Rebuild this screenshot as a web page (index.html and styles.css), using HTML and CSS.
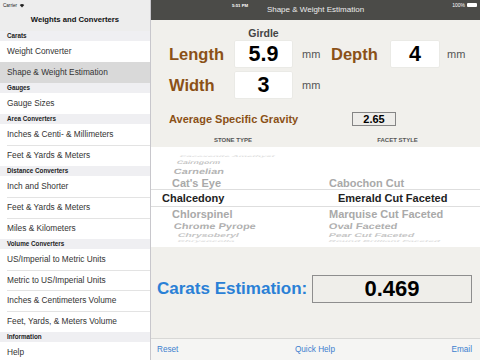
FILE: index.html
```html
<!DOCTYPE html>
<html>
  <head>
    <meta charset="utf-8" />
    <title>Weights and Converters</title>
    <link rel="stylesheet" href="styles.css">
  </head>

  <body>
    <div class="statusbar">
      <span class="carrier">
        Carrier
        <svg class="wifi" viewBox="0 0 10 8" width="6" height="5"><path d="M5 7.5 L1.2 3.2 A5.6 5.6 0 0 1 8.8 3.2 Z" fill="#222" /></svg>
      </span>
      <span class="clock">5:51 PM</span>
      <span class="power">100% <span class="battery"></span></span>
    </div>

    <div class="app">
      <aside class="master">
        <div class="master-bar">
          <h1>Weights and Converters</h1>
        </div>
        <ul class="menu">
          <li class="section">Carats</li>
          <li class="item">Weight Converter</li>
          <li class="item selected">Shape &amp; Weight Estimation</li>
          <li class="section">Gauges</li>
          <li class="item">Gauge Sizes</li>
          <li class="section">Area Converters</li>
          <li class="item">Inches &amp; Centi- &amp; Millimeters</li>
          <li class="item">Feet &amp; Yards &amp; Meters</li>
          <li class="section">Distance Converters</li>
          <li class="item">Inch and Shorter</li>
          <li class="item">Feet &amp; Yards &amp; Meters</li>
          <li class="item">Miles &amp; Kilometers</li>
          <li class="section">Volume Converters</li>
          <li class="item">US/Imperial to Metric Units</li>
          <li class="item">Metric to US/Imperial Units</li>
          <li class="item">Inches &amp; Centimeters Volume</li>
          <li class="item">Feet, Yards, &amp; Meters Volume</li>
          <li class="section">Information</li>
          <li class="item">Help</li>
        </ul>
      </aside>

      <main class="detail">
        <div class="detail-bar">
          <h2>Shape &amp; Weight Estimation</h2>
        </div>

        <div class="sheet">
          <div class="dims">
            <div class="girdle">Girdle</div>
            <div class="dim-row">
              <span class="dim-label">Length</span>
              <span class="dim-box">5.9</span>
              <span class="unit">mm</span>
              <span class="dim-label depth">Depth</span>
              <span class="dim-box narrow">4</span>
              <span class="unit last">mm</span>
            </div>
            <div class="dim-row">
              <span class="dim-label">Width</span>
              <span class="dim-box">3</span>
              <span class="unit">mm</span>
            </div>
          </div>

          <div class="gravity">
            <span class="gravity-label">Average Specific Gravity</span>
            <span class="gravity-box">2.65</span>
          </div>

          <div class="picker-heads">
            <span>STONE TYPE</span>
            <span>FACET STYLE</span>
          </div>

          <div class="picker">
            <div class="wheel stones">
              <div class="slot up4"><span>Cacoxenite Amethyst</span></div>
              <div class="slot up3"><span>Cairngorm</span></div>
              <div class="slot up2"><span>Carnelian</span></div>
              <div class="slot up1"><span>Cat's Eye</span></div>
              <div class="slot current"><span>Chalcedony</span></div>
              <div class="slot down1"><span>Chlorspinel</span></div>
              <div class="slot down2"><span>Chrome Pyrope</span></div>
              <div class="slot down3"><span>Chrysoberyl</span></div>
              <div class="slot down4"><span>Chrysocolla</span></div>
            </div>
            <div class="wheel facets">
              <div class="slot up4"></div>
              <div class="slot up3"></div>
              <div class="slot up2"></div>
              <div class="slot up1"><span>Cabochon Cut</span></div>
              <div class="slot current"><span>Emerald Cut Faceted</span></div>
              <div class="slot down1"><span>Marquise Cut Faceted</span></div>
              <div class="slot down2"><span>Oval Faceted</span></div>
              <div class="slot down3"><span>Pear Cut Faceted</span></div>
              <div class="slot down4"><span>Round Brilliant Faceted</span></div>
            </div>
          </div>

          <div class="estimate">
            <span class="estimate-label">Carats Estimation:</span>
            <span class="estimate-box">0.469</span>
          </div>
        </div>

        <div class="toolbar">
          <a href="#">Reset</a>
          <a href="#">Quick Help</a>
          <a href="#">Email</a>
        </div>
      </main>
    </div>
  </body>
</html>
```

FILE: styles.css
```css
* {
  box-sizing: border-box;
}

html,
body {
  margin: 0;
  padding: 0;
  overflow: hidden;
}

body {
  position: relative;
  width: 480px;
  height: 360px;
  font-family: 'Liberation Sans', Arial, sans-serif;
}

a {
  color: #3d7fcf;
  text-decoration: none;
}

/* status bar, drawn over both bars */

.statusbar {
  position: absolute;
  top: 0;
  left: 0;
  width: 480px;
  height: 10px;
  padding: 0 3px;
  display: grid;
  grid-template-columns: 1fr auto 1fr;
  align-items: center;
  font-size: 4.6px;
  z-index: 2;
}

.carrier {
  display: flex;
  align-items: center;
  gap: 1.5px;
  color: #222;
}

.clock {
  color: #fff;
  font-weight: bold;
  font-size: 4.3px;
}

.power {
  justify-self: end;
  display: flex;
  align-items: center;
  gap: 2px;
  color: #fff;
  font-size: 5px;
}

.battery {
  width: 10px;
  height: 4.5px;
  background-color: #fff;
  border-radius: 1px;
}

.app {
  display: flex;
  height: 360px;
}

/* master list */

.master {
  width: 151px;
  flex: none;
  border-right: 1px solid #c8c7cc;
  background-color: #fff;
}

.master-bar {
  height: 31px;
  padding-top: 9px;
  background-color: #ededed;
}

.master-bar h1 {
  margin: 0;
  font-size: 7.7px;
  line-height: 22px;
  text-align: center;
  color: #111;
}

.menu {
  list-style: none;
  margin: 0;
  padding: 0;
}

.section {
  height: 10.3px;
  line-height: 10.3px;
  padding-left: 7px;
  background-color: #efeff2;
  font-size: 6.3px;
  font-weight: bold;
  color: #222;
}

.item {
  height: 20.8px;
  line-height: 20.8px;
  padding-left: 7px;
  font-size: 8.3px;
  color: #333;
  background-color: #fff;
}

.item + .item {
  background: linear-gradient(#e3e3e3, #e3e3e3) 7px 0 / 100% 1px no-repeat, #fff;
}

.item.selected {
  background: #d9d9d9;
}

/* detail */

.detail {
  flex: 1;
  display: flex;
  flex-direction: column;
  background-color: #f1f0ec;
}

.detail-bar {
  height: 20px;
  flex: none;
  background-color: #4b4b48;
}

.detail-bar h2 {
  margin: 0;
  font-size: 8px;
  font-weight: normal;
  line-height: 20px;
  text-align: center;
  color: #ececec;
}

.sheet {
  flex: 1;
}

.dims {
  padding: 6px 0 0 18px;
}

.girdle {
  width: 57px;
  height: 15px;
  margin-left: 66px;
  line-height: 15px;
  text-align: center;
  font-size: 10.5px;
  font-weight: bold;
  color: #444;
}

.dim-row {
  display: flex;
  align-items: center;
  height: 26px;
}

.dim-row + .dim-row {
  margin-top: 5px;
}

.dim-label {
  width: 66px;
  font-size: 16.5px;
  font-weight: bold;
  color: #8b5117;
}

.dim-label.depth {
  width: 60px;
}

.dim-box {
  width: 57px;
  height: 26px;
  line-height: 26px;
  text-align: center;
  background-color: #fff;
  border-radius: 1px;
  box-shadow: 0 0 0 0.5px #e4e3df;
  font-size: 21.5px;
  font-weight: bold;
  color: #000;
}

.dim-box.narrow {
  width: 48px;
}

.unit {
  width: 39px;
  padding-left: 10px;
  font-size: 11px;
  color: #555;
}

.unit.last {
  padding-left: 8px;
}

.gravity {
  display: flex;
  align-items: center;
  height: 14px;
  margin-top: 14px;
  padding-left: 18px;
}

.gravity-label {
  width: 183px;
  font-size: 11px;
  font-weight: bold;
  color: #8b5117;
}

.gravity-box {
  width: 44px;
  height: 14px;
  line-height: 12px;
  text-align: center;
  border: 1px solid #858585;
  background-color: #eeedea;
  font-size: 11px;
  font-weight: bold;
  color: #000;
}

.picker-heads {
  display: grid;
  grid-template-columns: 164px 1fr;
  height: 14px;
  margin-top: 7px;
  line-height: 14px;
  text-align: center;
  font-size: 6px;
  font-weight: bold;
  color: #555;
}

/* picker wheels */

.picker {
  display: grid;
  grid-template-columns: 164px 1fr;
  height: 100px;
  padding: 5px 0 4px;
  background-color: #fff;
  overflow: hidden;
}

.wheel {
  display: flex;
  flex-direction: column;
}

.slot {
  display: flex;
  align-items: center;
  padding-left: 21px;
  font-size: 11px;
  font-weight: bold;
  color: #a9a9a9;
  white-space: nowrap;
}

.slot span {
  display: inline-block;
  transform-origin: left center;
}

.up4 {
  height: 7px;
  color: #dedede;
}

.up4 span {
  transform: scale(0.85, 0.22) skewX(-16deg);
}

.up3 {
  height: 6px;
  color: #c4c4c4;
}

.up3 span {
  transform: scale(0.78, 0.45) skewX(-14deg);
}

.up2 {
  height: 12px;
  color: #b4b4b4;
}

.up2 span {
  transform: scale(1, 0.7) skewX(-9deg);
}

.up1 {
  height: 12px;
}

.up1 span {
  transform: scaleY(0.92);
}

.current {
  height: 18px;
  border-top: 1px solid #dedede;
  border-bottom: 1px solid #dedede;
  color: #222;
}

.down1 {
  height: 13px;
}

.down1 span {
  transform: scaleY(0.95);
}

.down2 {
  height: 11px;
  color: #b0b0b0;
}

.down2 span {
  transform: scale(1, 0.75) skewX(-6deg);
}

.down3 {
  height: 7px;
  color: #c6c6c6;
}

.down3 span {
  transform: scale(0.95, 0.5) skewX(-12deg);
}

.down4 {
  height: 5px;
  color: #e0e0e0;
}

.down4 span {
  transform: scale(0.9, 0.25) skewX(-14deg);
}

.stones .up4 {
  padding-left: 29px;
}

.stones .up3 {
  padding-left: 26px;
}

.stones .up2,
.stones .down2 {
  padding-left: 23px;
}

.stones .current {
  padding-left: 11px;
}

.stones .down3,
.stones .down4 {
  padding-left: 27px;
}

.facets .slot {
  padding-left: 14px;
}

.facets .current {
  padding-left: 23px;
}

/* result */

.estimate {
  display: flex;
  align-items: center;
  justify-content: space-between;
  height: 28px;
  margin-top: 28px;
  padding: 0 8px 0 6px;
}

.estimate-label {
  font-size: 17px;
  font-weight: bold;
  color: #2a80d6;
}

.estimate-box {
  width: 160px;
  height: 28px;
  line-height: 26px;
  text-align: center;
  border: 1px solid #8e8e8e;
  background-color: #efeeea;
  font-size: 22px;
  font-weight: bold;
  color: #000;
}

.toolbar {
  height: 22px;
  flex: none;
  display: flex;
  align-items: center;
  justify-content: space-between;
  padding: 0 8px 0 6px;
  border-top: 1px solid #d8d8d6;
  background-color: #f5f5f3;
  font-size: 8.2px;
}
```
